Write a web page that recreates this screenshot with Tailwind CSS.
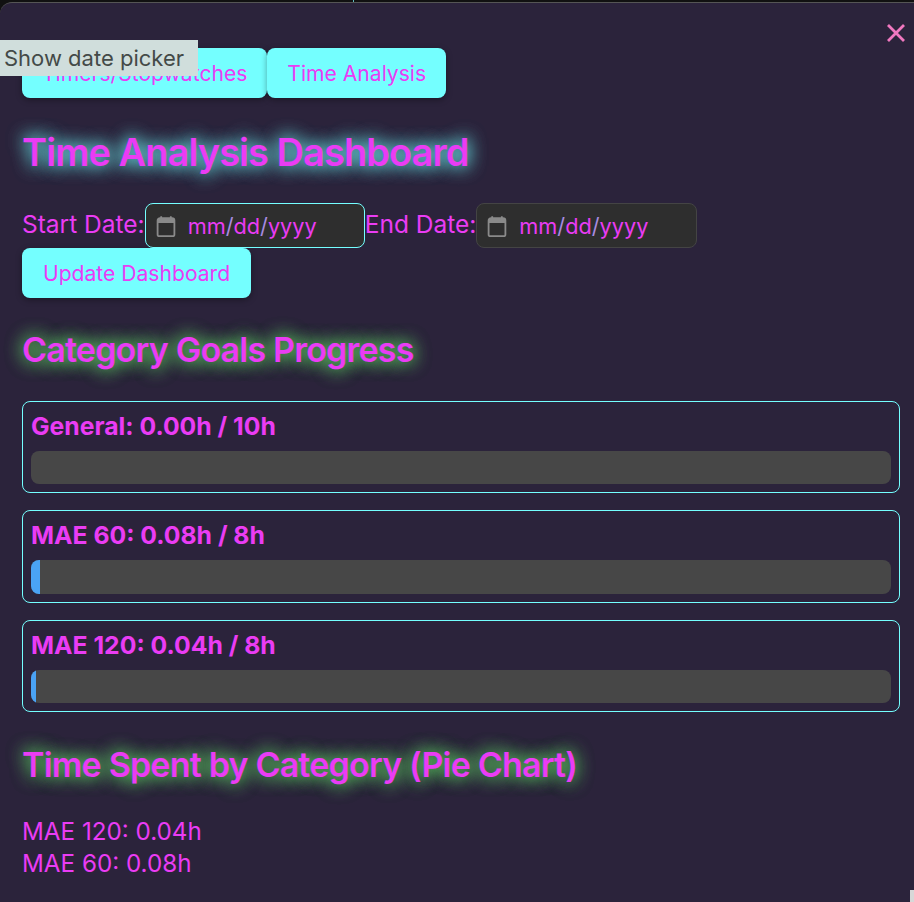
<!DOCTYPE html>
<html>
<head>
<meta charset="utf-8">
<script src="https://cdn.jsdelivr.net/npm/@tailwindcss/browser@4"></script>
</head>
<body class="m-0 bg-[#111111] font-['Inter','Liberation_Sans',sans-serif] overflow-hidden">
<div class="relative h-[902px] w-[914px] overflow-hidden">
  <div class="absolute left-[353px] top-0 h-[2px] w-px bg-[#5fbcc0]"></div>
  <div class="relative mt-[2px] h-[900px] w-[914px] rounded-tl-[12px] border-t border-[#555555] bg-[#2b233b] pl-[22px] pr-[14px] pt-[45px] text-[#ea3cf4]">
    <button class="absolute right-[6px] top-[18px] flex h-6 w-6 items-center justify-center">
      <svg width="20" height="20" viewBox="0 0 20 20" fill="none" stroke="#f178c0" stroke-width="2.8"><path d="M2 2 L18 18 M18 2 L2 18"/></svg>
    </button>
    <div class="flex">
      <button class="h-[50px] rounded-[8px] bg-[#74ffff] px-5 pt-[1px] text-[21.1px] shadow-[0_2px_6px_rgba(0,0,0,0.35)]">Timers/Stopwatches</button>
      <button class="h-[50px] rounded-[8px] bg-[#74ffff] px-5 pt-[1px] text-[21.1px] shadow-[0_2px_6px_rgba(0,0,0,0.35)]">Time Analysis</button>
    </div>
    <h1 class="mt-[32px] text-[38px] leading-[44px] font-semibold tracking-[-0.95px] [text-shadow:0_0_18px_rgba(116,255,255,0.8),0_0_18px_rgba(116,255,255,0.8)]">Time Analysis Dashboard</h1>
    <div class="mt-[29px] flex items-start">
      <label class="text-[24.5px] leading-[42px]">Start Date:</label>
      <div class="flex h-[45px] w-[220px] items-center rounded-[8px] border border-[#74ffff] bg-[#2e2e2e] pl-2 text-[21.7px]">
        <svg width="24" height="24" viewBox="0 0 20 20" fill="none" class="shrink-0"><path d="M3 5.5a2 2 0 0 1 2-2h10a2 2 0 0 1 2 2V17a1.5 1.5 0 0 1-1.5 1.5h-11A1.5 1.5 0 0 1 3 17Z" stroke="#8a8a8a" stroke-width="1.5"/><path d="M3 4h14v3.5H3Z" fill="#8a8a8a"/><path d="M6 1.8v3M14 1.8v3" stroke="#8a8a8a" stroke-width="1.5"/></svg>
        <span class="ml-[10px] mt-[1px]">mm<span class="text-[#a78ce0]">/</span>dd<span class="text-[#a78ce0]">/</span>yyyy</span>
      </div>
      <label class="text-[24.5px] leading-[42px]">End Date:</label>
      <div class="flex h-[45px] w-[221px] items-center rounded-[8px] border border-[#444444] bg-[#2e2e2e] pl-2 text-[21.7px]">
        <svg width="24" height="24" viewBox="0 0 20 20" fill="none" class="shrink-0"><path d="M3 5.5a2 2 0 0 1 2-2h10a2 2 0 0 1 2 2V17a1.5 1.5 0 0 1-1.5 1.5h-11A1.5 1.5 0 0 1 3 17Z" stroke="#8a8a8a" stroke-width="1.5"/><path d="M3 4h14v3.5H3Z" fill="#8a8a8a"/><path d="M6 1.8v3M14 1.8v3" stroke="#8a8a8a" stroke-width="1.5"/></svg>
        <span class="ml-[10px] mt-[1px]">mm<span class="text-[#a78ce0]">/</span>dd<span class="text-[#a78ce0]">/</span>yyyy</span>
      </div>
    </div>
    <button class="block h-[50px] rounded-[8px] bg-[#74ffff] px-[21px] pt-[1px] text-[21.1px] shadow-[0_2px_6px_rgba(0,0,0,0.35)]">Update Dashboard</button>
    <h2 class="mt-[30px] text-[34px] leading-[44px] font-semibold tracking-[-0.8px] [text-shadow:0_0_18px_rgba(110,255,110,0.75),0_0_18px_rgba(110,255,110,0.75)]">Category Goals Progress</h2>
    <div class="mt-[29px] flex flex-col gap-[17px]">
      <div class="h-[92px] rounded-[8px] border border-[#74ffff] pl-2 pr-2 pt-[8px]">
        <p class="text-[24.75px] leading-[32px] font-bold">General: 0.00h / 10h</p>
        <div class="mt-[9px] h-[33px] overflow-hidden rounded-[8px] bg-[#474747]"></div>
      </div>
      <div class="h-[93px] rounded-[8px] border border-[#74ffff] pl-2 pr-2 pt-[8px]">
        <p class="text-[24.75px] leading-[32px] font-bold">MAE 60: 0.08h / 8h</p>
        <div class="mt-[9px] h-[34px] overflow-hidden rounded-[8px] bg-[#474747]"><div class="h-full w-[9px] bg-[#4aa3f5]"></div></div>
      </div>
      <div class="h-[92px] rounded-[8px] border border-[#74ffff] pl-2 pr-2 pt-[8px]">
        <p class="text-[24.75px] leading-[32px] font-bold">MAE 120: 0.04h / 8h</p>
        <div class="mt-[9px] h-[33px] overflow-hidden rounded-[8px] bg-[#474747]"><div class="h-full w-[5px] bg-[#4aa3f5]"></div></div>
      </div>
    </div>
    <h2 class="mt-[31px] text-[34px] leading-[44px] font-semibold tracking-[-0.8px] [text-shadow:0_0_18px_rgba(110,255,110,0.75),0_0_18px_rgba(110,255,110,0.75)]">Time Spent by Category (Pie Chart)</h2>
    <div class="mt-[29px] text-[24.2px] leading-[32px]">
      <p>MAE 120: 0.04h</p>
      <p>MAE 60: 0.08h</p>
    </div>
  </div>
  <div class="absolute left-0 top-[40px] flex h-9 w-[198px] items-center bg-[#d0dedc] pl-[4px] text-[22px] text-[#444a48]">Show date picker</div>
  <div class="absolute bottom-0 right-0 h-3 w-[4px] bg-[#d8d8d8]"></div>
</div>
</body>
</html>
